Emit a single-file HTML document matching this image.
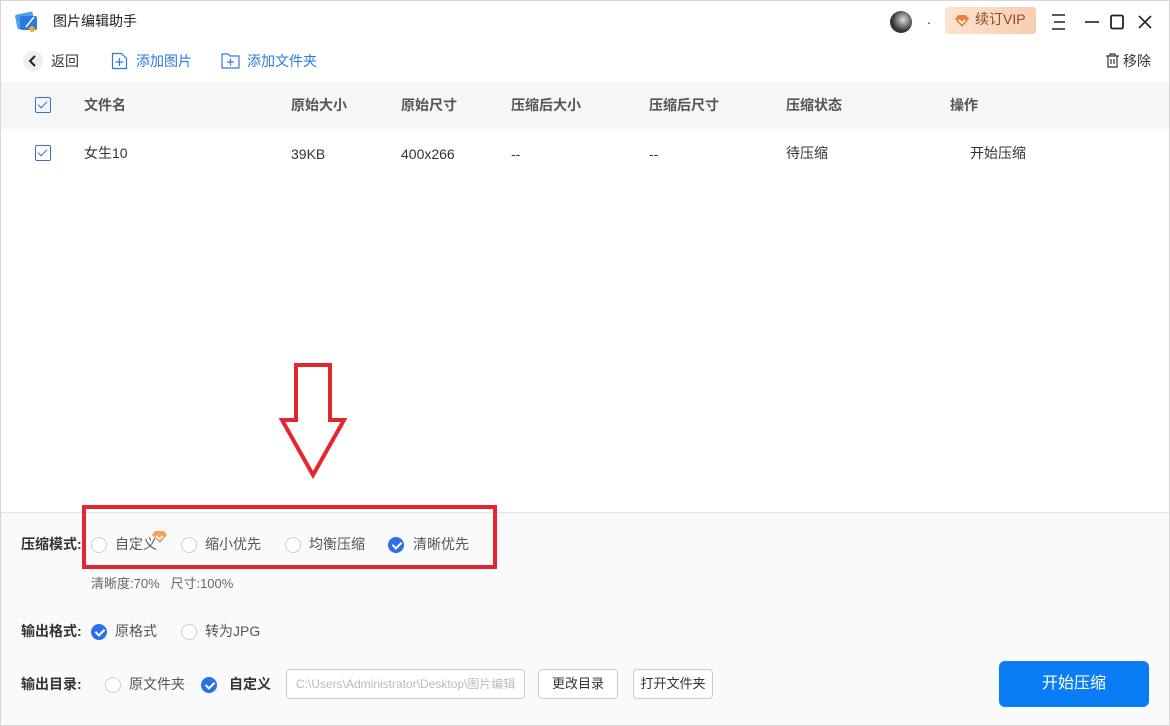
<!DOCTYPE html>
<html><head><meta charset="utf-8"><style>
*{margin:0;padding:0;box-sizing:border-box}
body{width:1170px;height:726px;overflow:hidden;font-family:"Liberation Sans","Noto Sans CJK SC",sans-serif;font-size:14px;color:#333;background:#fff;position:relative}
.frame{position:absolute;left:0;top:0;width:1170px;height:726px;border:1px solid #d6d6d6}
.a{position:absolute;white-space:nowrap}
.c{margin-top:-2px}
.cb{position:absolute;width:16px;height:16px;border:1.5px solid #3a6fd8;border-radius:2px}
.cb:after{content:"";position:absolute;left:4px;top:1px;width:4px;height:8px;border:solid #3a6fd8;border-width:0 1.5px 1.5px 0;transform:rotate(45deg)}
.r{position:absolute;width:16px;height:16px;border:1px solid #d0d0d0;border-radius:50%;background:#fff}
.rc{position:absolute;width:16px;height:16px;border-radius:50%;background:#2c6fe6}
.rc:after{content:"";position:absolute;left:5.5px;top:2.5px;width:4px;height:7px;border:solid #fff;border-width:0 2px 2px 0;transform:rotate(45deg)}
.th{font-weight:bold;color:#555}
.btn{position:absolute;border:1px solid #ccc;border-radius:4px;background:#fff;font-size:13px;text-align:center}
</style></head><body>
<div class="frame"></div>
<svg class="a" style="left:14px;top:9px" width="26" height="26" viewBox="0 0 26 26"><rect x="2" y="4" width="18" height="15" rx="2" fill="#4aa0f0" transform="rotate(-12 11 11)"/><rect x="6" y="7" width="17" height="14" rx="2" fill="#2a7be0"/><circle cx="18" cy="20" r="3" fill="#f3a43a"/><path d="M12 18l8-10" stroke="#fff" stroke-width="1.5"/></svg>
<div class="a c" style="left:53px;top:13px;font-size:14px;color:#222">图片编辑助手</div>
<div class="a" style="left:890px;top:11px;width:22px;height:22px;border-radius:50%;background:radial-gradient(circle at 60% 40%,#ddd,#333 60%)"></div>
<div class="a" style="left:927px;top:11px;color:#333">.</div>
<div class="a" style="left:945px;top:7px;width:91px;height:27px;border-radius:3px;background:linear-gradient(90deg,#fde3d0,#f9cdb0);color:#8a4a22;font-size:14px;line-height:25px;padding-left:30px">续订VIP</div>
<svg class="a" style="left:954px;top:14px" width="16" height="14" viewBox="0 0 16 14"><path d="M4 1h8l3 4-7 8-7-8z" fill="#e9823a"/><path d="M5 6l3 3 3-3" stroke="#fff" stroke-width="1.6" fill="none"/></svg>
<svg class="a" style="left:1050px;top:12px" width="110" height="20" viewBox="0 0 110 20"><path d="M2 3h13M4 10h11M2 17h13" stroke="#222" stroke-width="1.6"/><path d="M35 10h14" stroke="#222" stroke-width="1.6"/><rect x="61" y="3.5" width="12" height="13" rx="1.5" fill="none" stroke="#222" stroke-width="1.8"/><path d="M89 4l12 12M101 4l-12 12" stroke="#222" stroke-width="1.6"/></svg>
<div class="a" style="left:23px;top:51px;width:20px;height:20px;border-radius:50%;background:#eee"></div>
<svg class="a" style="left:27px;top:54px" width="12" height="14"><path d="M8 2L3 7l5 5" stroke="#222" stroke-width="2" fill="none"/></svg>
<div class="a c" style="left:51px;top:53px">返回</div>
<svg class="a" style="left:111px;top:52px" width="17" height="18"><path d="M1.5 1.5h9l5 5v10h-14z" fill="none" stroke="#2a7be0" stroke-width="1.2"/><path d="M8.5 6v8M4.5 10h8" stroke="#2a7be0" stroke-width="1.2"/></svg>
<div class="a c" style="left:136px;top:53px;color:#2a7be0">添加图片</div>
<svg class="a" style="left:221px;top:53px" width="19" height="16"><path d="M1 1h6l2 2h9v12H1z" fill="none" stroke="#2a7be0" stroke-width="1.2"/><path d="M9.5 5.5v7M6 9h7" stroke="#2a7be0" stroke-width="1.2"/></svg>
<div class="a c" style="left:247px;top:53px;color:#2a7be0">添加文件夹</div>
<svg class="a" style="left:1105px;top:53px" width="15" height="15"><path d="M1 3h13M5 3V1h5v2M3 3v11h9V3M6 6v5M9 6v5" stroke="#333" stroke-width="1.2" fill="none"/></svg>
<div class="a c" style="left:1123px;top:53px">移除</div>
<div class="a" style="left:1px;top:82px;width:1168px;height:47px;background:#f5f6f8"></div>
<div class="cb" style="left:35px;top:97px"></div>
<div class="a th c" style="left:84px;top:97px">文件名</div>
<div class="a th c" style="left:291px;top:97px">原始大小</div>
<div class="a th c" style="left:401px;top:97px">原始尺寸</div>
<div class="a th c" style="left:511px;top:97px">压缩后大小</div>
<div class="a th c" style="left:649px;top:97px">压缩后尺寸</div>
<div class="a th c" style="left:786px;top:97px">压缩状态</div>
<div class="a th c" style="left:950px;top:97px">操作</div>
<div class="cb" style="left:35px;top:145px"></div>
<div class="a c" style="left:84px;top:145px">女生10</div>
<div class="a" style="left:291px;top:146px">39KB</div>
<div class="a" style="left:401px;top:146px">400x266</div>
<div class="a" style="left:511px;top:146px">--</div>
<div class="a" style="left:649px;top:146px">--</div>
<div class="a c" style="left:786px;top:145px">待压缩</div>
<div class="a c" style="left:970px;top:145px">开始压缩</div>
<svg class="a" style="left:275px;top:358px" width="80" height="125"><path d="M21 7h34v55h14L38 117 7 62h14z" fill="none" stroke="#e5262f" stroke-width="4" stroke-linejoin="miter"/></svg>
<div class="a" style="left:1px;top:512px;width:1168px;height:213px;background:#f9fafc;border-top:1px solid #e4e4e4"></div>
<div class="a c" style="left:21px;top:536px;font-weight:bold;color:#333">压缩模式:</div>
<div class="r" style="left:91px;top:537px"></div><div class="a c" style="left:115px;top:536px;color:#555">自定义</div>
<svg class="a" style="left:151px;top:530px" width="17" height="14"><path d="M4 1h9l3 4-7 8-8-8z" fill="#f0a45a"/><path d="M5 6l3.5 3 3.5-3" stroke="#fff" stroke-width="1.6" fill="none"/></svg>
<div class="r" style="left:181px;top:537px"></div><div class="a c" style="left:205px;top:536px;color:#555">缩小优先</div>
<div class="r" style="left:285px;top:537px"></div><div class="a c" style="left:309px;top:536px;color:#555">均衡压缩</div>
<div class="rc" style="left:388px;top:537px"></div><div class="a c" style="left:413px;top:536px;color:#555">清晰优先</div>
<div class="a" style="left:82px;top:505px;width:415px;height:64px;border:4px solid #e5262f"></div>
<div class="a c" style="left:91px;top:575px;font-size:13px;color:#666">清晰度:70%&nbsp;&nbsp;&nbsp;尺寸:100%</div>
<div class="a c" style="left:21px;top:623px;font-weight:bold">输出格式:</div>
<div class="rc" style="left:91px;top:624px"></div><div class="a c" style="left:115px;top:623px;color:#555">原格式</div>
<div class="r" style="left:181px;top:624px"></div><div class="a c" style="left:205px;top:623px;color:#555">转为JPG</div>
<div class="a c" style="left:21px;top:676px;font-weight:bold">输出目录:</div>
<div class="r" style="left:105px;top:677px"></div><div class="a c" style="left:129px;top:676px;color:#555">原文件夹</div>
<div class="rc" style="left:201px;top:677px"></div><div class="a c" style="left:229px;top:676px;font-weight:bold">自定义</div>
<div class="a" style="left:286px;top:669px;width:239px;height:30px;border:1px solid #ccc;border-radius:4px;background:#fff;font-size:12px;color:#bbb;line-height:28px;padding-left:9px;overflow:hidden">C:\Users\Administrator\Desktop\图片编辑</div>
<div class="btn" style="left:538px;top:669px;width:80px;height:30px;line-height:27px">更改目录</div>
<div class="btn" style="left:633px;top:669px;width:80px;height:30px;line-height:27px">打开文件夹</div>
<div class="a" style="left:999px;top:661px;width:150px;height:46px;border-radius:6px;background:#0a7cf5;color:#fff;font-size:16px;text-align:center;line-height:46px">开始压缩</div>
</body></html>
